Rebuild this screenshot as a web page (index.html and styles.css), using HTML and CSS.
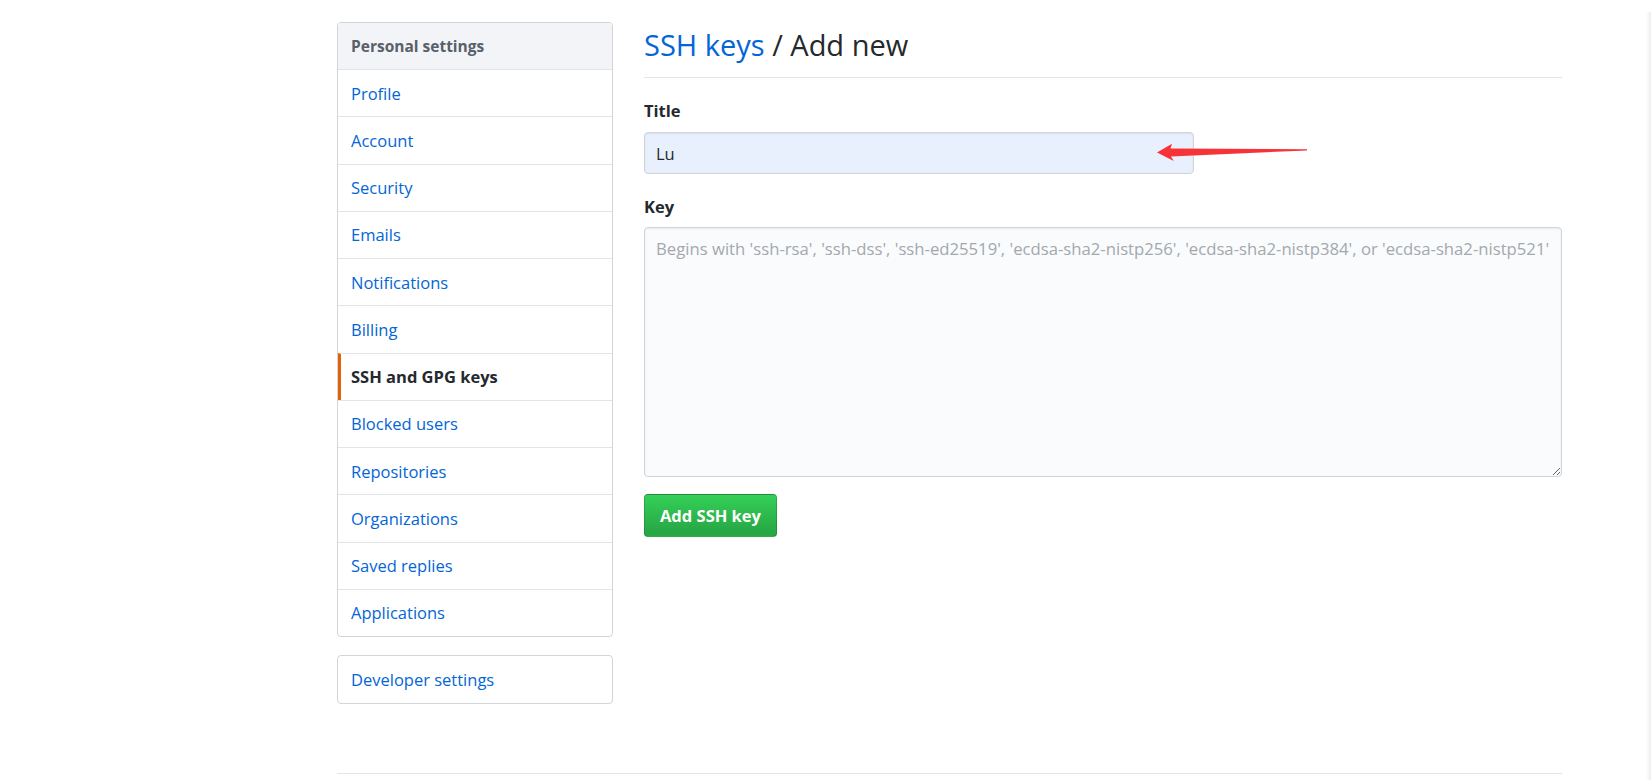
FILE: index.html
```html
<!DOCTYPE html>
<html lang="en">
<head>
<meta charset="utf-8">
<title>SSH keys / Add new</title>
<link rel="stylesheet" href="styles.css">
</head>
<body>
<div class="page">
  <div class="layout">
    <aside class="sidebar">
      <nav class="menu">
        <div class="menu-heading">Personal settings</div>
        <a class="menu-item" href="#">Profile</a>
        <a class="menu-item" href="#">Account</a>
        <a class="menu-item" href="#">Security</a>
        <a class="menu-item" href="#">Emails</a>
        <a class="menu-item" href="#">Notifications</a>
        <a class="menu-item" href="#">Billing</a>
        <a class="menu-item selected" href="#">SSH and GPG keys</a>
        <a class="menu-item" href="#">Blocked users</a>
        <a class="menu-item" href="#">Repositories</a>
        <a class="menu-item" href="#">Organizations</a>
        <a class="menu-item" href="#">Saved replies</a>
        <a class="menu-item" href="#">Applications</a>
      </nav>
      <nav class="menu menu-dev">
        <a class="menu-item" href="#">Developer settings</a>
      </nav>
    </aside>
    <main class="main">
      <div class="subhead">
        <h2 class="subhead-heading"><a href="#" class="crumb">SSH keys</a> / Add new</h2>
      </div>
      <form class="form">
        <div class="form-group">
          <label class="label" for="title">Title</label>
          <input class="form-control input-title" id="title" type="text" value="Lu">
        </div>
        <div class="form-group">
          <label class="label" for="key">Key</label>
          <textarea class="form-control input-key" id="key" placeholder="Begins with 'ssh-rsa', 'ssh-dss', 'ssh-ed25519', 'ecdsa-sha2-nistp256', 'ecdsa-sha2-nistp384', or 'ecdsa-sha2-nistp521'"></textarea>
        </div>
        <button type="button" class="btn-primary">Add SSH key</button>
      </form>
    </main>
  </div>
  <footer class="footer"></footer>
</div>
<svg class="annotation" width="1651" height="780" viewBox="0 0 1651 780">
  <polygon fill="#f73338" points="1157,152.5 1172,143.8 1170.5,148.6 1307,149.3 1307,150.4 1171,156.6 1173.8,161"/>
</svg>
<div class="edge-shadow"></div>
</body>
</html>
```
FILE: styles.css
```css
html, body {
  margin: 0;
  padding: 0;
  background: #ffffff;
}
body {
  font-family: "Open Sans", "Noto Sans", "Liberation Sans", sans-serif;
  font-size: 16.5px;
  color: #24292e;
  position: relative;
  width: 1651px;
  height: 780px;
  overflow: hidden;
}
.page {
  padding-left: 337px;
  padding-top: 22px;
  width: 1225px;
}
.layout {
  display: flex;
  gap: 31px;
  align-items: flex-start;
}
.sidebar {
  width: 276px;
  flex: none;
}
.menu {
  border: 1px solid #d1d5da;
  border-radius: 4px;
  background: #fff;
  overflow: hidden;
}
.menu-heading {
  height: 46px;
  box-sizing: border-box;
  background: #f3f4f8;
  color: #586069;
  font-weight: 700;
  font-size: 15.5px;
  padding-left: 13px;
  display: flex;
  align-items: center;
}
.menu-item {
  display: flex;
  align-items: center;
  box-sizing: border-box;
  height: 47.25px;
  border-top: 1px solid #e1e4e8;
  padding-left: 13px;
  color: #0366d6;
  text-decoration: none;
}
.menu-item.selected {
  color: #24292e;
  font-weight: 700;
  border-left: 3px solid #e36209;
  padding-left: 10px;
}
.menu-dev {
  margin-top: 18px;
}
.menu-dev .menu-item {
  border-top: none;
  height: 47px;
}
.main {
  width: 918px;
  flex: none;
}
.subhead {
  border-bottom: 1px solid #e1e4e8;
  height: 56px;
  box-sizing: border-box;
}
.subhead-heading {
  margin: 0;
  font-size: 29px;
  font-weight: 400;
  line-height: 45px;
  color: #24292e;
}
.crumb {
  color: #0366d6;
  text-decoration: none;
}
.form {
  display: flex;
  flex-direction: column;
  align-items: flex-start;
}
.form-group {
  display: flex;
  flex-direction: column;
  align-items: flex-start;
}
.label {
  font-weight: 700;
  font-size: 16.5px;
  line-height: 22px;
}
.form-group:first-child .label {
  margin-top: 22px;
  margin-bottom: 10px;
}
.form-group:nth-child(2) .label {
  margin-top: 22px;
  margin-bottom: 9px;
}
.form-control {
  box-sizing: border-box;
  border: 1px solid #d1d5da;
  border-radius: 4px;
  font-family: "Open Sans", "Noto Sans", "Liberation Sans", sans-serif;
  font-size: 16.5px;
  color: #24292e;
  padding: 0 11px;
  outline: none;
  margin: 0;
  box-shadow: inset 0 1px 2px rgba(27,31,35,0.075);
}
.input-title {
  width: 550px;
  height: 42px;
  background: #e8f0fe;
}
.input-key {
  width: 918px;
  height: 250px;
  background: #fafbfc;
  padding-top: 9px;
  line-height: 24px;
  font-size: 16.7px;
  resize: vertical;
}
.input-key::placeholder {
  color: #a3a8ae;
}
.btn-primary {
  margin-top: 17px;
  width: 133px;
  height: 43px;
  border: 1px solid rgba(27,31,35,0.2);
  border-radius: 4px;
  background: linear-gradient(-180deg, #34d058 0%, #28a745 90%);
  color: #fff;
  font-family: "Open Sans", "Noto Sans", "Liberation Sans", sans-serif;
  font-weight: 700;
  font-size: 16.5px;
  padding: 0;
}
.footer {
  margin-top: 69px;
  border-top: 1px solid #e1e4e8;
  height: 1px;
}
.annotation {
  position: absolute;
  left: 0;
  top: 0;
  pointer-events: none;
}
.edge-shadow {
  position: absolute;
  right: 0;
  top: 12px;
  bottom: 0;
  width: 5px;
  background: linear-gradient(90deg, rgba(0,0,0,0), rgba(0,0,0,0.07));
}
```
